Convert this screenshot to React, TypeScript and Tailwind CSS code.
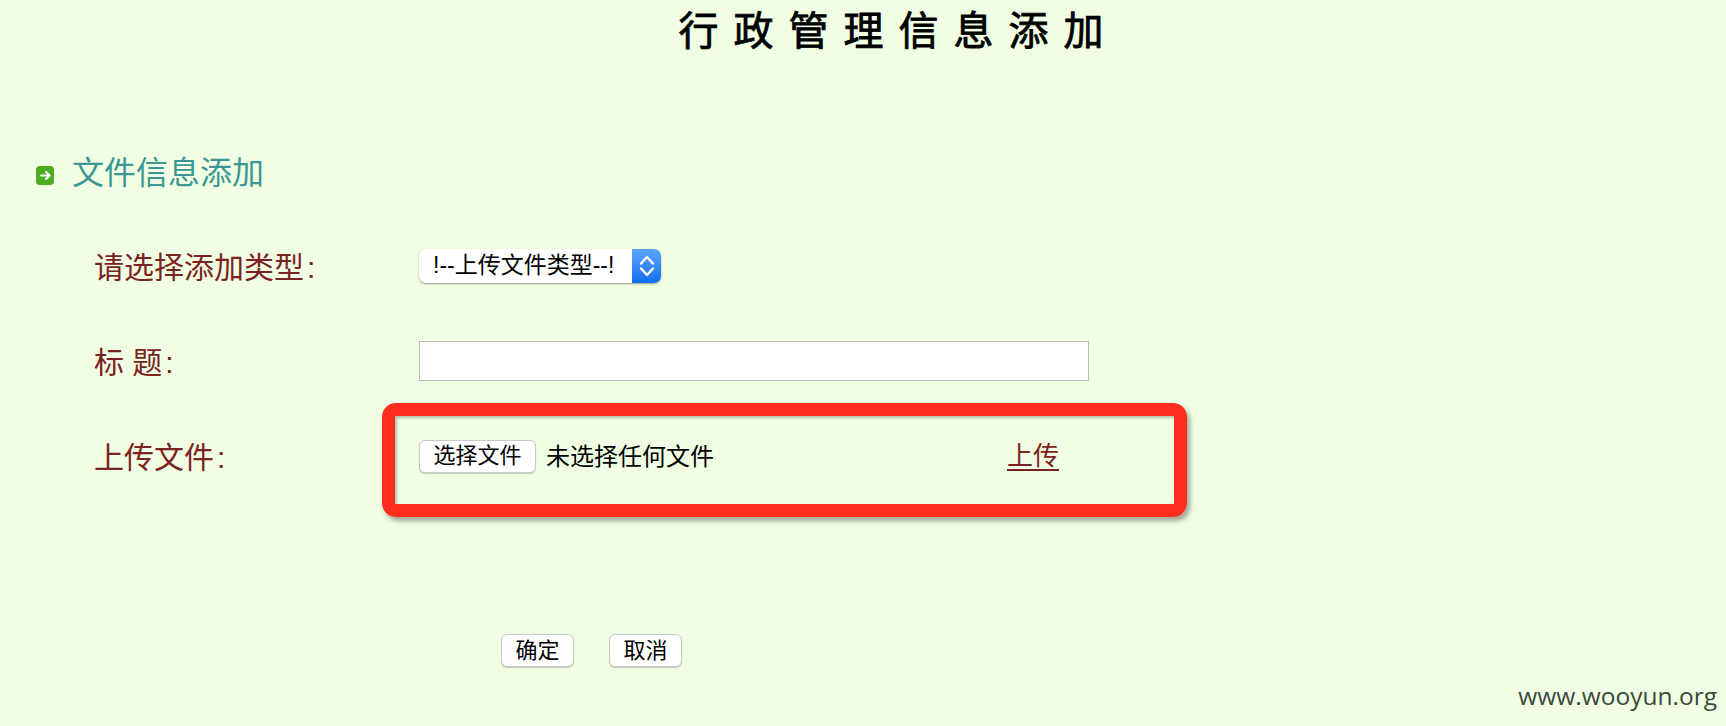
const cjk = "font-['Liberation_Sans','Noto_Sans_CJK_SC',sans-serif]";

function PlainButton({ label, className }: { label: string; className: string }) {
  return (
    <button
      type="button"
      className={`flex h-[33px] items-center justify-center rounded-[6px] border border-[#c9c9c9] bg-white text-[22px] leading-none text-black shadow-[0_1px_1px_rgba(0,0,0,0.2)] ${className}`}
    >
      {label}
    </button>
  );
}

function SelectBox() {
  return (
    <div className="flex h-[34px] w-[242px] overflow-hidden rounded-[7px] bg-white shadow-[0_1px_2px_rgba(0,0,0,0.4)]">
      <span className="flex-1 pl-[14px] text-[23px] leading-[32px] whitespace-nowrap text-black">!--上传文件类型--!</span>
      <span className="flex w-[29px] items-center justify-center bg-gradient-to-b from-[#5aa5fb] to-[#0f6ef0]">
        <svg width="16" height="24" viewBox="0 0 16 24" fill="none" stroke="#fff" strokeWidth="2.4" strokeLinecap="round" strokeLinejoin="round">
          <path d="M2 9.5 8 3 14 9.5" />
          <path d="M2 14.5 8 21 14 14.5" />
        </svg>
      </span>
    </div>
  );
}

function FieldLabel({ text }: { text: string }) {
  return (
    <label className="pt-[4px] text-[30px] leading-[34px] whitespace-nowrap">
      {text}
      <span className="ml-[3px]">:</span>
    </label>
  );
}

export default function App() {
  return (
    <div className={`relative h-[726px] w-full overflow-hidden bg-[#f0ffe4] ${cjk}`}>
      <h1 className="pt-[8px] pl-[71px] text-center text-[40px] leading-[46px] font-normal tracking-[15px] text-black [-webkit-text-stroke:0.8px_black]">
        行政管理信息添加
      </h1>

      <div className="mt-[99px] flex items-center pl-[36px]">
        <span className="flex h-[19px] w-[18px] translate-y-[2px] items-center justify-center rounded-[4px] bg-[#4cae1e]">
          <svg width="13" height="13" viewBox="0 0 12 12" fill="none" stroke="#fff" strokeWidth="2" strokeLinecap="round" strokeLinejoin="round">
            <path d="M2 6h7.5M6.5 2.8 9.8 6 6.5 9.2" />
          </svg>
        </span>
        <h2 className="ml-[18px] text-[32px] leading-[40px] font-normal text-[#3c9794]">文件信息添加</h2>
      </div>

      <form className="mt-[54px] pl-[94px] text-[#7d2222]">
        <div className="grid h-[34px] grid-cols-[325px_1fr] items-center">
          <FieldLabel text="请选择添加类型" />
          <SelectBox />
        </div>
        <div className="mt-[60px] grid h-[40px] grid-cols-[325px_1fr] items-center">
          <FieldLabel text="标 题" />
          <input type="text" className="h-[40px] w-[670px] border border-[#bdbdbd] bg-white" />
        </div>
        <div className="mt-[56px] grid h-[33px] grid-cols-[325px_1fr] items-center">
          <FieldLabel text="上传文件" />
          <div className="flex items-center">
            <PlainButton label="选择文件" className="w-[117px]" />
            <span className="ml-[10px] text-[24px] leading-[33px] whitespace-nowrap text-black">未选择任何文件</span>
            <a href="#" className="ml-[293px] text-[26px] leading-[33px] whitespace-nowrap underline underline-offset-4">
              上传
            </a>
          </div>
        </div>
        <div className="mt-[164px] flex gap-[35px] pl-[407px]">
          <PlainButton label="确定" className="w-[73px]" />
          <PlainButton label="取消" className="w-[73px]" />
        </div>
      </form>

      {/* annotation drawn over the form */}
      <div className="pointer-events-none absolute top-[403px] left-[382px] h-[114px] w-[805px] rounded-[14px] border-[13px] border-[#ff2d1f] shadow-[3px_4px_5px_rgba(0,0,0,0.35),inset_2px_2px_3px_rgba(0,0,0,0.25)]" />

      <span className="absolute top-[680px] right-[9px] font-['Open_Sans',sans-serif] text-[24.5px] leading-[32px] text-[#3d483c]">
        www.wooyun.org
      </span>
    </div>
  );
}
